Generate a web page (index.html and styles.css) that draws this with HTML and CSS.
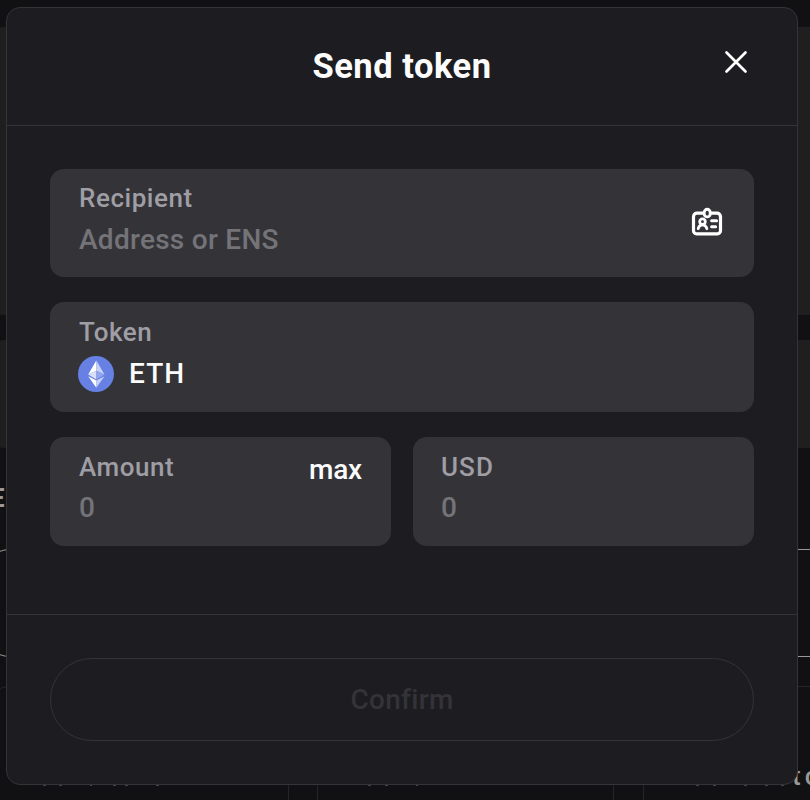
FILE: index.html
```html
<!DOCTYPE html>
<html lang="en">
<head>
<meta charset="utf-8">
<title>Send token</title>
<link rel="stylesheet" href="styles.css">
</head>
<body>
<div class="backdrop" aria-hidden="true">
  <div class="panel panel-tall"></div>
  <div class="panel panel-short"></div>
  <div class="section-title">E</div>
  <div class="search"></div>
  <div class="cards">
    <div class="card first"></div>
    <div class="card"></div>
    <div class="card last"><span>t</span><span>c</span></div>
  </div>
  <svg class="ticks" width="810" height="1" viewBox="0 0 810 1"><path stroke="#46464a" d="M43 .5h3M59 .5h3M90 .5h2M113 .5h3M125 .5h3M156 .5h3M368 .5h3M385 .5h3M416 .5h2M696 .5h3M713 .5h3M744 .5h3M765 .5h3M781 .5h3"/></svg>
</div>
<div class="modal" role="dialog" aria-labelledby="title">
  <header class="modal-header">
    <h1 id="title">Send token</h1>
    <button class="close" aria-label="Close">
      <svg width="24" height="24" viewBox="0 0 24 24" fill="none" stroke="#fff" stroke-width="2.7" stroke-linecap="round"><path d="M2.500 2.500l19 19M21.500 2.500l-19 19"/></svg>
    </button>
  </header>
  <div class="fields">
    <div class="field recipient">
      <div class="stack"><span class="label l-recipient">Recipient</span><span class="value hint l-address">Address or ENS</span></div>
      <svg class="contacts" width="32" height="30" viewBox="0 0 32 30" fill="none" stroke="#fff" stroke-width="3.200" stroke-linecap="round" stroke-linejoin="round">
        <path d="M12 6.200H6a3.500 3.500 0 0 0-3.500 3.500v14.100A3 3 0 0 0 5.500 26.800h21a3 3 0 0 0 3-3V9.700A3.500 3.500 0 0 0 26 6.200h-6"/>
        <rect x="13.200" y="2.300" width="6" height="7.600" rx="3" stroke-width="2.900"/>
        <circle cx="11.500" cy="14.700" r="2.800" stroke-width="2.800"/>
        <path d="M7.200 21.700c.5-2.500 1.900-3.800 4.300-3.800s3.700 1.300 4.400 3.800" stroke-width="2.800"/>
        <path d="M20.600 13.800h5M20.600 19.700h4" stroke-width="3"/>
      </svg>
    </div>
    <div class="field token">
      <div class="stack"><span class="label l-token">Token</span>
        <span class="asset">
          <svg width="36" height="36" viewBox="0 0 36 36"><circle cx="18" cy="18" r="18" fill="#6680e3"/><path fill="#fff" d="M18.300 4.500v10.200l-8.100 3.900zM18.300 24.500v7.300l-8.100-11.500z"/><path fill="#c7d0f5" d="M18.300 4.500v10.200l8.200 3.900zM18.300 24.500v7.300l8.200-11.500z"/><path fill="#d9dff8" d="M10.200 18.600l8.100-3.900v8.700z"/><path fill="#93a5eb" d="M26.500 18.600l-8.200-3.900v8.700z"/></svg>
          <span class="value eth">ETH</span>
        </span>
      </div>
    </div>
    <div class="pair">
      <div class="field amount">
        <div class="stack"><span class="label l-amount">Amount</span><span class="value hint">0</span></div>
        <button class="max">max</button>
      </div>
      <div class="field amount usd">
        <div class="stack"><span class="label l-usd">USD</span><span class="value hint">0</span></div>
      </div>
    </div>
  </div>
  <footer class="modal-footer"><button class="confirm" disabled><span>Confirm</span></button></footer>
</div>
</body>
</html>
```
FILE: styles.css
```css
* { box-sizing: border-box; }
html, body { margin: 0; height: 100%; overflow: hidden; }
body { position: relative; background: #111113; color: #fcfcfd; font-family: Roboto, "Liberation Sans", sans-serif; font-weight: 500; }
button { padding: 0; border: 0; background: none; color: inherit; font: inherit; }
svg { display: block; flex: none; }

.backdrop { position: relative; height: 800px; display: flex; flex-direction: column; padding-top: 27px; overflow: hidden; }
.panel { flex: none; background: #1f1f20; margin-left: -12px; margin-right: -20px; border-radius: 16px; }
.panel-tall { height: 288px; margin-bottom: 25px; }
.panel-short { height: 108px; }
.section-title { flex: none; height: 101px; padding-top: 35px; margin-left: -10px; font-size: 26px; line-height: 30px; font-weight: 700; color: #999; }
.search { flex: none; height: 108px; border: 1px solid #999; border-radius: 30px; margin: 0 -40px 0 -20px; }
.cards { display: flex; flex: none; height: 180px; margin-top: 29px; margin-left: -8px; gap: 28px; }
.card { flex: none; width: 297px; border: 1px solid #252527; border-radius: 16px; }
.card.last { width: 298px; margin-left: 1px; display: flex; gap: 4px; padding: 74px 0 0 148px; font-size: 26px; line-height: 30px; color: #999; }
.ticks { position: absolute; left: 0; top: 785px; }

.modal { position: absolute; top: 7px; left: 6px; width: 792px; height: 778px; display: flex; flex-direction: column; background: #1d1c20; border: 1px solid #343338; border-radius: 14px; overflow: hidden; }
.modal-header { height: 118px; flex: none; display: grid; grid-template-columns: 80px 1fr 80px; border-bottom: 1px solid #343338; }
h1 { grid-column: 2; margin: 38px 0 0; text-align: center; font-size: 34.5px; line-height: 40px; font-weight: 700; letter-spacing: .5px; }
.close { grid-column: 3; width: 24px; height: 24px; margin: 42px 0 0 7px; }
.fields { height: 489px; flex: none; padding: 43px 43px 0; display: flex; flex-direction: column; gap: 25px; border-bottom: 1px solid #343338; }
.field { display: flex; justify-content: space-between; background: #343338; border-radius: 14px; padding: 14px 28px 0 29px; }
.recipient { height: 108px; padding-right: 31px; }
.token { height: 110px; padding-top: 15px; }
.pair { display: grid; grid-template-columns: 1fr 1fr; gap: 22px; }
.amount { height: 109px; padding-top: 15px; }
.usd { padding-left: 28px; }
.stack { display: flex; flex-direction: column; }
.label { font-size: 26px; line-height: 30px; color: #9f9ea4; letter-spacing: .55px; }
.value { font-size: 28px; line-height: 32px; margin-top: 10px; letter-spacing: .4px; }
.hint { color: #747378; }
.l-address { margin-top: 11px; letter-spacing: .28px; }
.l-usd { letter-spacing: 1.1px; }
.contacts { margin-top: 24px; }
.asset { display: flex; align-items: center; gap: 15px; margin: 9px 0 0 -1px; }
.asset .value { margin-top: 0; letter-spacing: 1.1px; }
.max { align-self: flex-start; margin: 2px 1px 0 0; font-size: 28px; line-height: 32px; letter-spacing: -.2px; }
.modal-footer { padding: 43px 43px 0; }
.confirm { display: block; width: 100%; height: 83px; border: 1px solid #343338; border-radius: 42px; font-size: 28px; line-height: 32px; color: #343338; letter-spacing: .3px; }
```
